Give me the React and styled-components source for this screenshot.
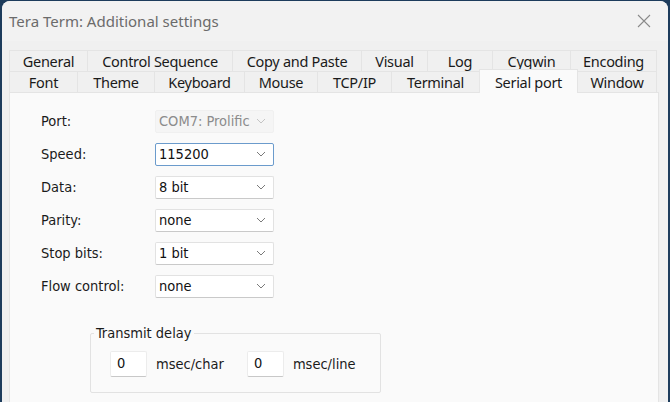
import styled, { createGlobalStyle } from "styled-components";

const GlobalStyle = createGlobalStyle`
  html, body {
    margin: 0;
    padding: 0;
    background: #1d3c5c;
    overflow: hidden;
  }
  * {
    box-sizing: border-box;
  }
`;

const tabRows = [
  [
    { label: "General", width: 79 },
    { label: "Control Sequence", width: 145 },
    { label: "Copy and Paste", width: 129 },
    { label: "Visual", width: 66 },
    { label: "Log", width: 65 },
    { label: "Cygwin", width: 78 },
    { label: "Encoding", width: 86 },
  ],
  [
    { label: "Font", width: 69 },
    { label: "Theme", width: 77 },
    { label: "Keyboard", width: 90 },
    { label: "Mouse", width: 73 },
    { label: "TCP/IP", width: 74 },
    { label: "Terminal", width: 88 },
    { label: "Serial port", width: 98, active: true },
    { label: "Window", width: 79 },
  ],
];

const fields = [
  { label: "Port:", value: "COM7: Prolific", disabled: true },
  { label: "Speed:", value: "115200", focused: true },
  { label: "Data:", value: "8 bit" },
  { label: "Parity:", value: "none" },
  { label: "Stop bits:", value: "1 bit" },
  { label: "Flow control:", value: "none" },
];

export default function App() {
  return (
    <>
      <GlobalStyle />
      <Window>
        <TitleBar>
          <Title>Tera Term: Additional settings</Title>
          <CloseButton aria-label="Close">
            <svg width="14" height="14" viewBox="0 0 14 14">
              <path d="M1 1L13 13M13 1L1 13" stroke="#8a8a8a" strokeWidth="1.1" fill="none" />
            </svg>
          </CloseButton>
        </TitleBar>

        <Body>
          <TabStrip>
            {tabRows.map((row, i) => (
              <TabRow key={i}>
                {row.map((tab) => (
                  <Tab key={tab.label} $width={tab.width} $active={tab.active}>
                    {tab.label}
                  </Tab>
                ))}
              </TabRow>
            ))}
          </TabStrip>

          <Panel>
            <FormGrid>
              {fields.map((f) => (
                <Field key={f.label}>
                  <Label>{f.label}</Label>
                  <Select $disabled={f.disabled} $focused={f.focused}>
                    <span>{f.value}</span>
                    <Chevron width="10" height="6" viewBox="0 0 10 6">
                      <path d="M1 1L5 5L9 1" stroke={f.disabled ? "#c4c4c4" : "#7a7a7a"} strokeWidth="1" fill="none" />
                    </Chevron>
                  </Select>
                </Field>
              ))}
            </FormGrid>

            <GroupBox>
              <Legend>Transmit delay</Legend>
              <DelayRow>
                <NumberBox>0</NumberBox>
                <Unit>msec/char</Unit>
                <NumberBox>0</NumberBox>
                <Unit>msec/line</Unit>
              </DelayRow>
            </GroupBox>
          </Panel>
        </Body>
      </Window>
    </>
  );
}

const uiFont = `"DejaVu Sans Condensed", "DejaVu Sans", sans-serif`;

const Window = styled.div`
  margin: 1px 2px 0 2px;
  height: 401px;
  background: #f0f0f0;
  border-radius: 8px 8px 0 0;
  display: flex;
  flex-direction: column;
  overflow: hidden;
`;

const TitleBar = styled.div`
  height: 40px;
  flex-shrink: 0;
  display: flex;
  align-items: center;
  justify-content: space-between;
  padding: 0 14px 0 7px;
  background: #f2f2f2;
`;

const Title = styled.div`
  font-family: "Noto Sans", "Open Sans", sans-serif;
  font-size: 15px;
  color: #6b6b6b;
`;

const CloseButton = styled.div`
  width: 20px;
  height: 20px;
  display: flex;
  align-items: center;
  justify-content: center;
`;

const Body = styled.div`
  flex: 1;
  display: flex;
  flex-direction: column;
  padding: 9px 9px 0 7px;
`;

const TabStrip = styled.div`
  display: flex;
  flex-direction: column;
`;

const TabRow = styled.div`
  display: flex;
  height: 21px;
`;

const Tab = styled.div`
  width: ${(p) => p.$width}px;
  flex-shrink: 0;
  display: flex;
  align-items: center;
  justify-content: center;
  font-family: "Noto Sans", "Open Sans", sans-serif;
  font-size: 14.5px;
  letter-spacing: -0.3px;
  color: #1a1a1a;
  background: ${(p) => (p.$active ? "#fafafa" : "#f0f0f0")};
  border-top: 1px solid #e4e4e4;
  border-right: 1px solid #e4e4e4;

  &:first-child {
    border-left: 1px solid #e4e4e4;
  }

  ${(p) =>
    p.$active &&
    `
    position: relative;
    z-index: 1;
    margin-top: -2px;
    height: 24px;
    margin-bottom: -1px;
    border-left: 1px solid #e6e6e6;
    margin-left: -1px;
    width: ${p.$width + 1}px;
  `}
`;

const Panel = styled.div`
  flex: 1;
  background: #fafafa;
  border: 1px solid #e4e4e4;
  border-bottom: none;
  padding: 17px 0 0 31px;
  display: flex;
  flex-direction: column;
`;

const FormGrid = styled.div`
  display: flex;
  flex-direction: column;
  gap: 11px;
`;

const Field = styled.div`
  display: flex;
  align-items: center;
  height: 22px;
`;

const Label = styled.div`
  width: 114px;
  font-family: ${uiFont};
  font-size: 14.5px;
  color: #1a1a1a;
`;

const Select = styled.div`
  width: 119px;
  height: 23px;
  display: flex;
  align-items: center;
  justify-content: space-between;
  padding: 0 7px 0 3px;
  font-family: ${uiFont};
  font-size: 14.5px;
  color: ${(p) => (p.$disabled ? "#8c8c8c" : "#111")};
  background: ${(p) => (p.$disabled ? "#f5f5f5" : "#ffffff")};
  border: 1px solid ${(p) => (p.$disabled ? "#f0f0f0" : p.$focused ? "#6b9bcc" : "#e2e2e2")};
  border-bottom-color: ${(p) => (p.$disabled ? "#f0f0f0" : p.$focused ? "#6b9bcc" : "#c9c9c9")};
  border-radius: 2px;
`;

const Chevron = styled.svg`
  flex-shrink: 0;
`;

const GroupBox = styled.fieldset`
  margin: 28px 0 0 49px;
  width: 291px;
  height: 68px;
  padding: 0 0 0 19px;
  border: 1px solid #e2e2e2;
  border-radius: 2px;
`;

const Legend = styled.legend`
  padding: 0 2px;
  margin-left: -16px;
  font-family: ${uiFont};
  font-size: 14.5px;
  color: #1a1a1a;
`;

const DelayRow = styled.div`
  display: flex;
  align-items: center;
  margin-top: 10px;
`;

const NumberBox = styled.div`
  width: 37px;
  height: 26px;
  display: flex;
  align-items: center;
  padding: 0 0 3px 6px;
  background: #ffffff;
  border: 1px solid #ececec;
  border-bottom-color: #c8c8c8;
  border-radius: 2px;
  font-family: ${uiFont};
  font-size: 14.5px;
  color: #111;
`;

const Unit = styled.div`
  font-family: ${uiFont};
  font-size: 14.5px;
  color: #1a1a1a;
  margin: 0 23px 0 9px;
`;
